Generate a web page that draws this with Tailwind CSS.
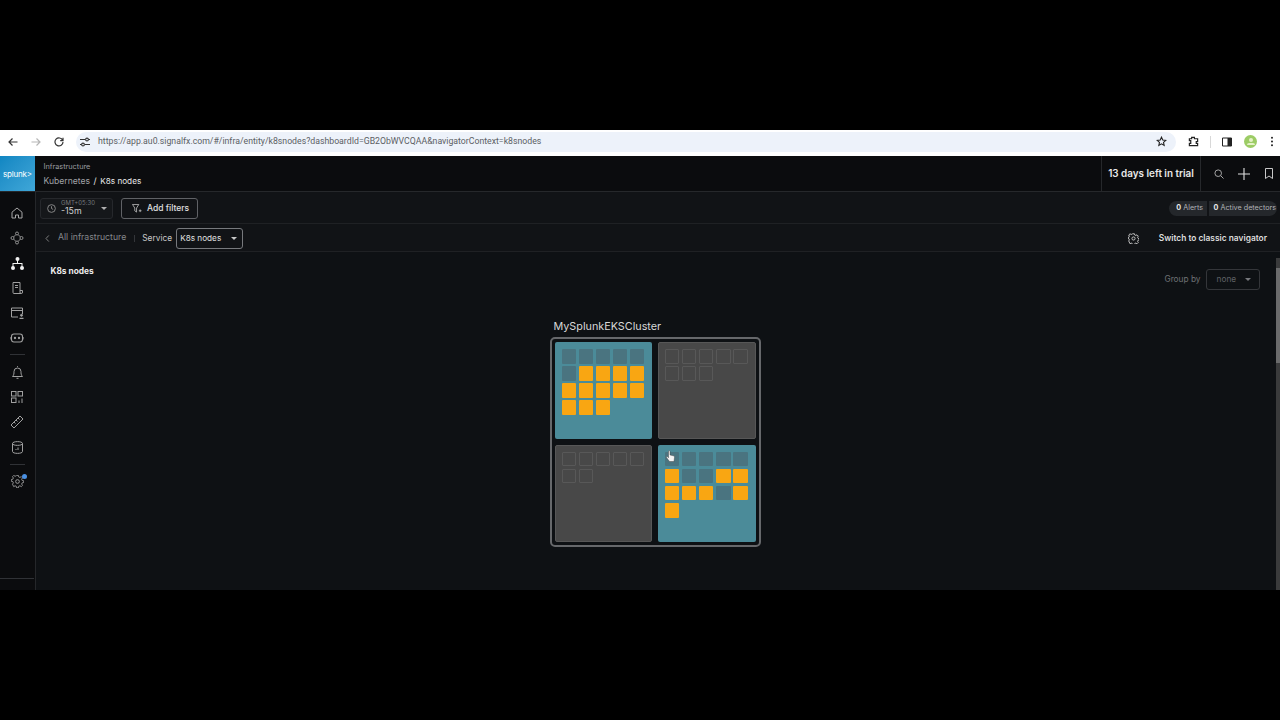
<!DOCTYPE html>
<html lang="en">
<head>
    <meta charset="UTF-8">
    <title>K8s nodes</title>
    <script src="https://cdn.jsdelivr.net/npm/@tailwindcss/browser@4"></script>
</head>
<body class="bg-black w-[1280px] h-[720px] overflow-hidden font-['Inter',sans-serif]">

    <div class="h-[130px]"></div>

    <!-- browser chrome -->
    <div class="h-[26px] bg-white flex items-center relative pb-[3px]">
        <div class="w-[76px] flex items-center shrink-0 pl-[8px] gap-[13px]">
            <svg class="w-[10px] h-[10px]" viewBox="0 0 10 10" fill="none" stroke="#333" stroke-width="1.2"><path d="M9.5 5H1M4.500 1.500 1 5l3.500 3.500"/></svg>
            <svg class="w-[10px] h-[10px]" viewBox="0 0 10 10" fill="none" stroke="#b5b5b5" stroke-width="1.2"><path d="M.5 5H9M5.500 1.500 9 5 5.500 8.500"/></svg>
            <svg class="w-[10px] h-[10px]" viewBox="0 0 10 10" fill="none" stroke="#333" stroke-width="1.200"><path d="M8.600 3.200A4 4 0 1 0 9 5M9 .8v2.800H6.200"/></svg>
        </div>
        <div class="w-[1100px] h-[20px] rounded-full bg-[#edf2fa] flex items-center pl-[3px] pr-[9px]">
            <svg class="w-[12px] h-[12px] shrink-0" viewBox="0 0 12 12" fill="none" stroke="#333" stroke-width="1.100"><path d="M1 3.500h5M9.500 3.500H11M1 8.500h1.500M6 8.500h5"/><circle cx="8" cy="3.500" r="1.400"/><circle cx="4" cy="8.500" r="1.400"/></svg>
            <span class="ml-[7px] text-[8.730px] text-[#5b5e63] font-['Roboto',sans-serif] whitespace-nowrap">https://app.au0.signalfx.com/#/infra/entity/k8snodes?dashboardId=GB2ObWVCQAA&amp;navigatorContext=k8snodes</span>
            <svg class="w-[11px] h-[11px] ml-auto" viewBox="0 0 12 12" fill="none" stroke="#222" stroke-width="1.200"><path d="m6 1.300 1.400 3.100 3.300.4-2.500 2.200.7 3.300L6 8.600l-2.900 1.700.7-3.300L1.300 4.800l3.300-.4z"/></svg>
        </div>
        <div class="flex items-center ml-[12px]">
            <svg class="w-[11px] h-[11px]" viewBox="0 0 12 12" fill="none" stroke="#222" stroke-width="1.300"><path d="M1.500 3H4V1.500h3V3h3.500v3H9v2h1.500v2.500h-9V8H3V5H1.500z"/></svg>
            <div class="w-px h-[12px] bg-[#d8d8d8] ml-[11px]"></div>
            <svg class="w-[10px] h-[10px] ml-[11px]" viewBox="0 0 10 10"><path d="M.5 1h9v8h-9z" fill="none" stroke="#222"/><path d="M5.500 1h4v8h-4z" fill="#222"/></svg>
            <div class="w-[13px] h-[13px] rounded-full bg-[#9ccc65] ml-[12px] flex flex-col items-center justify-center">
                <div class="w-[4px] h-[4px] rounded-full bg-[#e6f2c8]"></div>
                <div class="w-[8px] h-[2px] rounded-t-full bg-[#e6f2c8] mt-px"></div>
            </div>
            <svg class="w-[4px] h-[11px] ml-[13px]" viewBox="0 0 4 12" fill="#222"><circle cx="2" cy="2" r="1.100"/><circle cx="2" cy="6" r="1.100"/><circle cx="2" cy="10" r="1.100"/></svg>
        </div>
    </div>

    <!-- app -->
    <div class="h-[434px] flex flex-col bg-[#0e1114] text-white">

        <header class="h-[36px] flex bg-[#0b0c0e] border-b border-[#26282b] shrink-0">
            <div class="w-[35px] h-[35px] bg-gradient-to-br from-[#0f86c2] to-[#3fa7d8] flex items-center justify-center shrink-0 pt-px">
                <span class="text-[8px] text-white tracking-[-0.2px]">splunk&gt;</span>
            </div>
            <div class="pl-[8.500px] pt-[6px] flex-1">
                <div class="text-[7.300px] leading-[10px] text-[#9a9ca0]">Infrastructure</div>
                <div class="flex items-center text-[8.600px] leading-[12px] mt-[3px] text-[#a0a2a6]">Kubernetes<span class="mx-[3.500px] text-[#e8e8e8]">/</span><span class="text-[#e8e8e8] text-[8.200px]">K8s nodes</span></div>
            </div>
            <div class="w-[100px] border-x border-[#26282b] flex items-center justify-center text-[9.900px] font-semibold text-[#e8e8e8] whitespace-nowrap">13 days left in trial</div>
            <div class="w-[79px] flex items-center pl-[13px]">
                <svg class="w-[10px] h-[10px]" viewBox="0 0 10 10" fill="none" stroke="#a5a5a5" stroke-width="1"><circle cx="4.200" cy="4.200" r="3.300"/><path d="m6.700 6.700 2.800 2.800"/></svg>
                <svg class="w-[12px] h-[12px] ml-[14px]" viewBox="0 0 12 12" fill="none" stroke="#e0e0e0" stroke-width="1.100"><path d="M6 0v12M0 6h12"/></svg>
                <svg class="w-[8px] h-[11px] ml-[15px]" viewBox="0 0 8 11" fill="none" stroke="#c8c8c8" stroke-width="1"><path d="M.5.500h7v10L4 8 .5 10.500z"/></svg>
            </div>
        </header>

        <div class="flex flex-1 min-h-0">
            <!-- sidebar -->
            <aside class="w-[36px] shrink-0 bg-[#0b0c0e] border-r border-[#25272a] flex flex-col items-center pr-px pt-[8.500px] relative">
                <div class="h-[25px] flex items-center"><svg class="w-[12px] h-[12px]" viewBox="0 0 12 12" fill="none" stroke="#a8a8a8" stroke-width="1"><path d="M1 11V5.200L6 1l5 4.200V11H7.500V8h-3v3z"/></svg></div>
                <div class="h-[25px] flex items-center"><svg class="w-[14px] h-[14px]" viewBox="0 0 14 14" fill="none" stroke="#909090" stroke-width="1"><circle cx="7" cy="2.500" r="1.500"/><circle cx="2.500" cy="7" r="1.500"/><circle cx="11.500" cy="7" r="1.500"/><circle cx="7" cy="11.500" r="1.500"/><path d="M6 3.500 3.500 6M8 3.500 10.500 6M3.500 8 6 10.500M10.500 8 8 10.500"/></svg></div>
                <div class="h-[25px] flex items-center"><svg class="w-[13px] h-[13px]" viewBox="0 0 13 13" fill="#f2f2f2"><circle cx="6.500" cy="2" r="2"/><circle cx="2" cy="11" r="2"/><circle cx="11" cy="11" r="2"/><path d="M6 3h1v3h4.500v4h-1V7h-8v3h-1V6H6z"/></svg></div>
                <div class="h-[25px] flex items-center"><svg class="w-[12px] h-[12px]" viewBox="0 0 12 12" fill="none" stroke="#a0a0a0" stroke-width="1"><path d="M2 .5h7V10a1.200 1.200 0 0 0 1.200 1.500H3A1 1 0 0 1 2 10.500zM4 3.500h3M4 5.500h3M9 8.500h2.500V10a1.300 1.300 0 0 1-1.300 1.500"/></svg></div>
                <div class="h-[25px] flex items-center"><svg class="w-[13px] h-[12px]" viewBox="0 0 13 12" fill="none" stroke="#a0a0a0" stroke-width="1"><path d="M7 10H.5V1h11v6M.5 3.500h11"/><circle cx="10.500" cy="8.300" r="1" fill="#a0a0a0"/><path d="M8.500 11.500h4" stroke-width="1.500"/></svg></div>
                <div class="h-[25px] flex items-center"><svg class="w-[14px] h-[12px]" viewBox="0 0 14 12" fill="none" stroke="#a0a0a0" stroke-width="1.100"><rect x="1.500" y="2" width="11" height="8" rx="2.500"/><path d="M0 5v2.500M14 5v2.500"/><circle cx="5" cy="6" r=".6" fill="#a0a0a0"/><circle cx="9" cy="6" r=".6" fill="#a0a0a0"/></svg></div>
                <div class="w-[15px] h-px bg-[#303236] my-[5px] mt-[3px]"></div>
                <div class="h-[25px] flex items-center"><svg class="w-[11px] h-[13px]" viewBox="0 0 11 13" fill="none" stroke="#a0a0a0" stroke-width="1"><path d="M.5 10.500c1.500-1.500 1.500-3 1.500-5a3.500 3.500 0 0 1 7 0c0 2 0 3.500 1.500 5zM4.500 12.300h2M5.500 1V.2"/></svg></div>
                <div class="h-[25px] flex items-center"><svg class="w-[12px] h-[12px]" viewBox="0 0 12 12" fill="none" stroke="#a0a0a0" stroke-width="1"><rect x=".5" y=".5" width="4.500" height="4.500"/><rect x="7" y=".5" width="4.500" height="4.500"/><rect x=".5" y="7" width="4.500" height="4.500"/><path d="M8 9.500V12M11 7.500V12"/></svg></div>
                <div class="h-[25px] flex items-center"><svg class="w-[14px] h-[14px]" viewBox="0 0 14 14" fill="none" stroke="#a0a0a0" stroke-width="1"><path d="M1 10 10 1l3 3-9 9zM4 7l1.500 1.500M6 5l1.500 1.500M8 3l1.500 1.500"/></svg></div>
                <div class="h-[25px] flex items-center"><svg class="w-[11px] h-[13px]" viewBox="0 0 11 13" fill="none" stroke="#a0a0a0" stroke-width="1"><path d="M.5 2.500v8c0 2.500 10 2.500 10 0v-8M.5 2.500c0-2.500 10-2.500 10 0s-10 2.500-10 0zM4 9V8M6 9V6.500"/></svg></div>
                <div class="w-[15px] h-px bg-[#303236] my-[4px]"></div>
                <div class="h-[25px] flex items-center relative">
                    <svg class="w-[13px] h-[13px]" viewBox="0 0 14 14" fill="none" stroke="#a0a0a0" stroke-width="1"><circle cx="7" cy="7" r="2"/><path d="M6 .8h2l.4 1.800 1.400.6 1.600-1 1.400 1.400-1 1.600.6 1.400 1.800.4v2l-1.800.4-.6 1.400 1 1.600-1.400 1.400-1.600-1-1.400.6-.4 1.800H6l-.4-1.800-1.400-.6-1.600 1L1.200 11l1-1.600-.6-1.400L-.2 7.600v-2l1.800-.4.6-1.400-1-1.600L2.600.8l1.600 1 1.400-.6z" transform="translate(.5 -.3) scale(.93)"/></svg>
                    <div class="absolute top-[5px] left-[11px] w-[5px] h-[5px] rounded-full bg-[#4a90e2]"></div>
                </div>
                <div class="mt-auto mb-[11px] w-full h-px bg-[#303236]"></div>
            </aside>

            <div class="flex-1 min-w-0 flex flex-col">
                <!-- filters bar -->
                <div class="h-[32px] shrink-0 bg-[#111316] border-b border-[#1f2124] flex items-center pl-[4px] pr-[3px] pt-px">
                    <div class="w-[73px] h-[21px] rounded-[3px] bg-[#15171a] border border-[#26282c] flex items-center pl-[6px]">
                        <svg class="w-[9px] h-[9px] shrink-0" viewBox="0 0 10 10" fill="none" stroke="#909090" stroke-width="1"><circle cx="5" cy="5" r="4.300"/><path d="M5 2.500V5l1.800 1"/></svg>
                        <div class="ml-[5px] w-[40px]">
                            <div class="text-[6px] leading-[6px] text-[#77797d] whitespace-nowrap">GMT+05:30</div>
                            <div class="text-[8.800px] leading-[10px] text-[#d0d0d0]">-15m</div>
                        </div>
                        <div class="w-0 h-0 border-x-[3px] border-x-transparent border-t-[3px] border-t-[#b0b0b0]"></div>
                    </div>
                    <div class="ml-[8px] w-[77px] h-[21px] rounded-[3px] border border-[#606266] flex items-center pl-[10px] gap-[5px]">
                        <svg class="w-[10px] h-[9px]" viewBox="0 0 11 10" fill="none" stroke="#c0c0c0" stroke-width=".9"><path d="M.5.500h7L5 4.500V9L3 7.500v-3zM9 6v3M7.500 7.500h3"/></svg>
                        <span class="text-[8.500px] font-medium text-[#e0e0e0] whitespace-nowrap">Add filters</span>
                    </div>
                    <div class="ml-auto flex items-center gap-[2px] text-[7.200px] text-[#b0b2b6]">
                        <div class="h-[15px] w-[38px] rounded-l-full bg-[#24272b] flex items-center justify-end pr-[4px] whitespace-nowrap"><b class="font-bold text-[#e8e8e8]">0</b>&nbsp;Alerts</div>
                        <div class="h-[15px] w-[68px] rounded-r-full bg-[#24272b] flex items-center justify-end pr-px whitespace-nowrap"><b class="font-bold text-[#e8e8e8]">0</b>&nbsp;Active detectors</div>
                    </div>
                </div>

                <!-- service row -->
                <div class="h-[28px] shrink-0 bg-[#111316] border-b border-[#1f2124] flex items-center pl-[9px] pt-px">
                    <svg class="w-[5px] h-[7px]" viewBox="0 0 5 8" fill="none" stroke="#8a8a8a" stroke-width="1"><path d="M4 .5.800 4 4 7.500"/></svg>
                    <span class="ml-[8px] text-[8.700px] text-[#85878b] whitespace-nowrap">All infrastructure</span>
                    <div class="ml-[8px] w-px h-[7px] bg-[#34363a]"></div>
                    <span class="ml-[7px] text-[8.400px] text-[#c8c8c8]">Service</span>
                    <div class="ml-[4px] w-[67px] h-[21px] rounded-[3px] border border-[#77797d] flex items-center pl-[3px]">
                        <span class="text-[8.200px] text-[#e0e0e0] whitespace-nowrap">K8s nodes</span>
                        <div class="ml-auto mr-[5px] w-0 h-0 border-x-[3px] border-x-transparent border-t-[3px] border-t-[#c8c8c8]"></div>
                    </div>
                    <svg class="w-[11px] h-[11px] ml-auto" viewBox="0 0 14 14" fill="none" stroke="#c8c8c8" stroke-width="1.200"><circle cx="7" cy="7" r="2"/><path d="M5.800 1h2.400l.4 1.600 1.400.6 1.400-.9 1.700 1.700-.9 1.400.6 1.400 1.600.4v1.600l-1.600.4-.6 1.400.9 1.400-1.700 1.700-1.400-.9-1.400.6-.4 1.200H5.800l-.4-1.200-1.400-.6-1.400.9L.9 10.100l.9-1.400-.6-1.400L0 7V5.800l1.200-.4.600-1.400-.9-1.400L2.600 1 4 1.900l1.400-.6z"/></svg>
                    <span class="ml-[20px] mr-[13px] text-[8.400px] font-semibold text-[#dedede] whitespace-nowrap">Switch to classic navigator</span>
                </div>

                <!-- content -->
                <div class="flex-1 min-h-0 flex">
                    <main class="flex-1 min-w-0 pl-[14.500px] pr-[16px] pt-[14px]">
                        <div class="flex justify-between items-start">
                            <h2 class="text-[8.300px] leading-[11px] font-bold text-[#ececec]">K8s nodes</h2>
                            <div class="flex items-center mt-[3px] gap-[5px]">
                                <span class="text-[8.300px] text-[#6f7175] whitespace-nowrap">Group by</span>
                                <div class="w-[54px] h-[21px] rounded-[3px] border border-[#34363a] flex items-center pl-[10px]">
                                    <span class="text-[8.300px] text-[#5f6165]">none</span>
                                    <div class="ml-auto mr-[8px] w-0 h-0 border-x-[3px] border-x-transparent border-t-[3px] border-t-[#77797d]"></div>
                                </div>
                            </div>
                        </div>

                        <div class="flex justify-center mt-[30px]">
                            <div class="w-[211px]">
                                <div class="pl-[4px] text-[10.800px] leading-[14px] text-[#d8d8d8] whitespace-nowrap">MySplunkEKSCluster</div>
                                <div class="mt-[3px] h-[210px] rounded-[5px] border-2 border-[#66686b] grid grid-cols-2 gap-[5.500px] p-[3px] relative">
                                    <!-- node 1 -->
                                    <div class="bg-[#4b8b99] rounded-[2px] p-[7px]">
                                        <div class="grid grid-cols-[repeat(5,14.500px)] auto-rows-[14.500px] gap-[2.600px]">
                                            <div class="bg-[#4a7480] rounded-[1px]"></div><div class="bg-[#4a7480] rounded-[1px]"></div><div class="bg-[#4a7480] rounded-[1px]"></div><div class="bg-[#4a7480] rounded-[1px]"></div><div class="bg-[#4a7480] rounded-[1px]"></div>
                                            <div class="bg-[#4a7480] rounded-[1px]"></div><div class="bg-[#f9a612] rounded-[1px]"></div><div class="bg-[#f9a612] rounded-[1px]"></div><div class="bg-[#f9a612] rounded-[1px]"></div><div class="bg-[#f9a612] rounded-[1px]"></div>
                                            <div class="bg-[#f9a612] rounded-[1px]"></div><div class="bg-[#f9a612] rounded-[1px]"></div><div class="bg-[#f9a612] rounded-[1px]"></div><div class="bg-[#f9a612] rounded-[1px]"></div><div class="bg-[#f9a612] rounded-[1px]"></div>
                                            <div class="bg-[#f9a612] rounded-[1px]"></div><div class="bg-[#f9a612] rounded-[1px]"></div><div class="bg-[#f9a612] rounded-[1px]"></div>
                                        </div>
                                    </div>
                                    <!-- node 2 -->
                                    <div class="bg-[#484848] border border-[#575757] rounded-[2px] p-[6px]">
                                        <div class="grid grid-cols-[repeat(5,14.500px)] auto-rows-[14.500px] gap-[2.600px]">
                                            <div class="border border-[#585858] rounded-[1px]"></div><div class="border border-[#585858] rounded-[1px]"></div><div class="border border-[#585858] rounded-[1px]"></div><div class="border border-[#585858] rounded-[1px]"></div><div class="border border-[#585858] rounded-[1px]"></div>
                                            <div class="border border-[#585858] rounded-[1px]"></div><div class="border border-[#585858] rounded-[1px]"></div><div class="border border-[#585858] rounded-[1px]"></div>
                                        </div>
                                    </div>
                                    <!-- node 3 -->
                                    <div class="bg-[#484848] border border-[#575757] rounded-[2px] p-[6px]">
                                        <div class="grid grid-cols-[repeat(5,14.500px)] auto-rows-[14.500px] gap-[2.600px]">
                                            <div class="border border-[#585858] rounded-[1px]"></div><div class="border border-[#585858] rounded-[1px]"></div><div class="border border-[#585858] rounded-[1px]"></div><div class="border border-[#585858] rounded-[1px]"></div><div class="border border-[#585858] rounded-[1px]"></div>
                                            <div class="border border-[#585858] rounded-[1px]"></div><div class="border border-[#585858] rounded-[1px]"></div>
                                        </div>
                                    </div>
                                    <!-- node 4 -->
                                    <div class="bg-[#4b8b99] rounded-[2px] p-[7px]">
                                        <div class="grid grid-cols-[repeat(5,14.500px)] auto-rows-[14.500px] gap-[2.600px]">
                                            <div class="bg-[#4a7480] rounded-[1px]"></div><div class="bg-[#4a7480] rounded-[1px]"></div><div class="bg-[#4a7480] rounded-[1px]"></div><div class="bg-[#4a7480] rounded-[1px]"></div><div class="bg-[#4a7480] rounded-[1px]"></div>
                                            <div class="bg-[#f9a612] rounded-[1px]"></div><div class="bg-[#4a7480] rounded-[1px]"></div><div class="bg-[#4a7480] rounded-[1px]"></div><div class="bg-[#f9a612] rounded-[1px]"></div><div class="bg-[#f9a612] rounded-[1px]"></div>
                                            <div class="bg-[#f9a612] rounded-[1px]"></div><div class="bg-[#f9a612] rounded-[1px]"></div><div class="bg-[#f9a612] rounded-[1px]"></div><div class="bg-[#4a7480] rounded-[1px]"></div><div class="bg-[#f9a612] rounded-[1px]"></div>
                                            <div class="bg-[#f9a612] rounded-[1px]"></div>
                                        </div>
                                    </div>
                                    <!-- mouse pointer -->
                                    <svg class="absolute left-[114px] top-[111px] w-[9px] h-[13px]" viewBox="0 0 9 13" fill="#f4f4f4" stroke="#333" stroke-width=".4"><path d="M2.500 1a1 1 0 0 1 1.500 0v4l3.500.8c.8.2 1 .8 1 1.500L8 11.500H3.500L.5 7.500c-.3-.8.5-1.300 1-.8l1 1z"/></svg>
                                </div>
                            </div>
                        </div>
                    </main>
                    <!-- scrollbar -->
                    <div class="w-[4.500px] shrink-0 mt-[6px] bg-[#3a3b3c] pt-[10px]">
                        <div class="h-[95px] bg-[#6a6b6c]"></div>
                    </div>
                </div>
            </div>
        </div>
    </div>
</body>
</html>
